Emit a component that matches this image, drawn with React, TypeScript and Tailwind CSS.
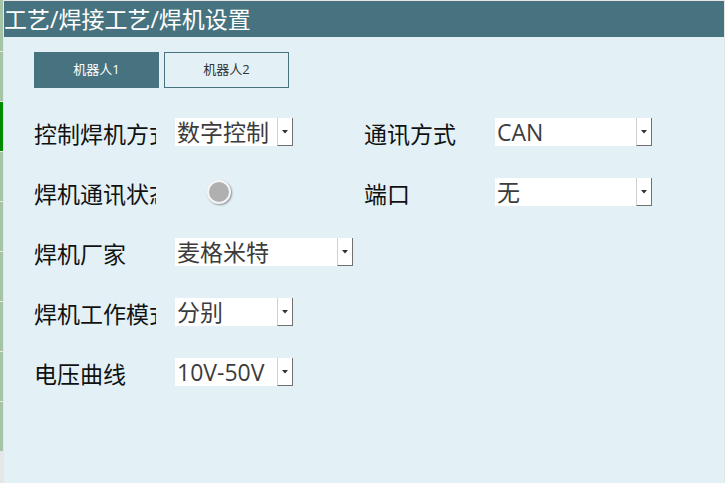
import React from "react";

const FONT = { fontFamily: '"Open Sans", "Noto Sans CJK SC", sans-serif' };

function Dropdown({ value, w }: { value: string; w: string }) {
  return (
    <div className={`flex h-[28px] bg-white ${w}`}>
      <div className="flex-1 overflow-hidden whitespace-nowrap pl-[2px] text-[23px] leading-[28px] text-[#3c3c3c]">
        {value}
      </div>
      <div className="flex w-[16px] items-center justify-center border-l border-b border-r border-l-[#d0d0d0] border-b-[#707070] border-r-[#707070]">
        <svg width="6" height="4" viewBox="0 0 6 4">
          <polygon points="0,0 6,0 3,3.5" fill="#333" />
        </svg>
      </div>
    </div>
  );
}

function Label({ text, w = "w-[122px]" }: { text: string; w?: string }) {
  return (
    <div className={`${w} shrink-0 overflow-hidden whitespace-nowrap pt-[3px] text-[23px] leading-[30px] text-[#111]`}>
      {text}
    </div>
  );
}

export default function App() {
  const segs = [0, 1, 2, 3, 4, 5, 6, 7];
  return (
    <div className="flex h-[483px] w-[725px] overflow-hidden bg-[#e6e6e6]" style={FONT}>
      {/* left strip */}
      <div className="flex w-[3px] shrink-0 flex-col">
        <div className="h-[51px] bg-[#a5c4a5]" />
        {segs.map((i) => (
          <div
            key={i}
            className={`mt-[1px] h-[49px] ${i === 1 ? "bg-[#008a00]" : "bg-[#a5c4a5]"}`}
          />
        ))}
      </div>
      <div className="ml-[1px] flex w-[720px] shrink-0 flex-col pt-[1px]">
        {/* header */}
        <div className="flex h-[36px] items-center bg-[#477380] text-[23px] leading-[36px] text-white">
          <span>工艺/焊接工艺/焊机设置</span>
        </div>
        {/* body */}
        <div className="flex flex-1 flex-col bg-[#e3f1f7] pl-[30px] pt-[15px]">
          <div className="flex gap-[5px]">
            <div className="flex h-[36px] w-[125px] items-center justify-center bg-[#477380] text-[13px] text-white">
              机器人1
            </div>
            <div className="flex h-[36px] w-[125px] items-center justify-center border border-[#477380] text-[13px] text-[#333]">
              机器人2
            </div>
          </div>
          <div className="mt-[14px] flex flex-col">
            <div className="flex h-[60px] items-center">
              <Label text="控制焊机方式" />
              <div className="ml-[19px] w-[189px]">
                <Dropdown value="数字控制" w="w-[118px]" />
              </div>
              <Label text="通讯方式" w="w-[131px]" />
              <Dropdown value="CAN" w="w-[157px]" />
            </div>
            <div className="flex h-[60px] items-center">
              <Label text="焊机通讯状态" />
              <div className="ml-[19px] flex w-[189px] items-center">
                <div className="ml-[32px] h-[24px] w-[24px] rounded-full border-2 border-[#f6f6f6] bg-[#b0b0b0] shadow-[1px_1px_2px_rgba(0,0,0,0.4)]" />
              </div>
              <Label text="端口" w="w-[131px]" />
              <Dropdown value="无" w="w-[157px]" />
            </div>
            <div className="flex h-[60px] items-center">
              <Label text="焊机厂家" />
              <div className="ml-[19px]">
                <Dropdown value="麦格米特" w="w-[178px]" />
              </div>
            </div>
            <div className="flex h-[60px] items-center">
              <Label text="焊机工作模式" />
              <div className="ml-[19px]">
                <Dropdown value="分别" w="w-[118px]" />
              </div>
            </div>
            <div className="flex h-[60px] items-center">
              <Label text="电压曲线" />
              <div className="ml-[19px]">
                <Dropdown value="10V-50V" w="w-[118px]" />
              </div>
            </div>
          </div>
        </div>
      </div>
    </div>
  );
}
